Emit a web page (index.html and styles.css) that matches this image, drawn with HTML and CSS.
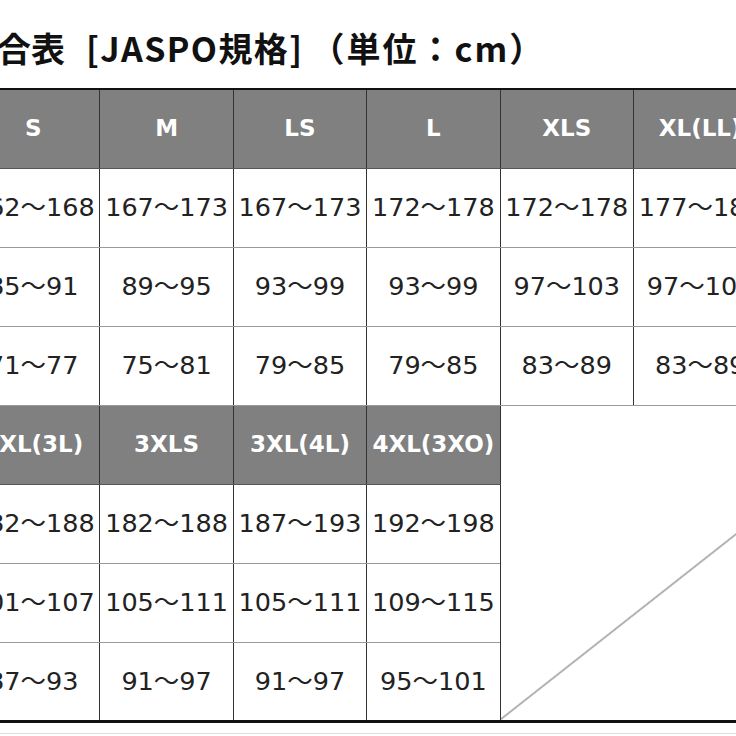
FILE: index.html
```html
<!DOCTYPE html>
<html lang="ja">
<head>
<meta charset="utf-8">
<title>サイズ適合表</title>
<link rel="stylesheet" href="styles.css">
</head>
<body>
<div class="page">
  <h1 class="title">合表<span class="std">[JASPO規格]</span><span class="unit">（単位：cm）</span></h1>
  <div class="table-wrap">
    <table class="size-table">
      <colgroup>
        <col class="c"><col class="c"><col class="c"><col class="c"><col class="c"><col class="c"><col class="c">
      </colgroup>
      <tr class="head">
        <th>S</th><th>M</th><th>LS</th><th>L</th><th>XLS</th><th>XL(LL)</th><th>2XLS</th>
      </tr>
      <tr>
        <td>162～168</td><td>167～173</td><td>167～173</td><td>172～178</td><td>172～178</td><td>177～183</td><td>177～183</td>
      </tr>
      <tr>
        <td>85～91</td><td>89～95</td><td>93～99</td><td>93～99</td><td>97～103</td><td>97～103</td><td>101～107</td>
      </tr>
      <tr>
        <td>71～77</td><td>75～81</td><td>79～85</td><td>79～85</td><td>83～89</td><td>83～89</td><td>87～93</td>
      </tr>
      <tr class="head">
        <th>2XL(3L)</th><th>3XLS</th><th>3XL(4L)</th><th>4XL(3XO)</th>
        <td class="blank" colspan="3" rowspan="4"></td>
      </tr>
      <tr>
        <td>182～188</td><td>182～188</td><td>187～193</td><td>192～198</td>
      </tr>
      <tr>
        <td>101～107</td><td>105～111</td><td>105～111</td><td>109～115</td>
      </tr>
      <tr>
        <td>87～93</td><td>91～97</td><td>91～97</td><td>95～101</td>
      </tr>
    </table>
  </div>
  <div class="footer-line"></div>
</div>
</body>
</html>
```
FILE: styles.css
```css
html, body {
  margin: 0;
  padding: 0;
  background: #ffffff;
  overflow: hidden;
}

.page {
  width: 736px;
  height: 736px;
  overflow: hidden;
}

.title {
  margin: 0 0 0 -3px;
  padding-top: 31px;
  height: 57px;
  line-height: 34px;
  font-family: "Noto Sans CJK JP", "Noto Sans", sans-serif;
  font-weight: 700;
  font-size: 34px;
  color: #111111;
  white-space: nowrap;
}

.title .std {
  margin-left: 21px;
  letter-spacing: 1.4px;
}

.title .unit {
  margin-left: 7px;
  letter-spacing: 2px;
}

.table-wrap {
  margin-left: -34px;
  width: 934px;
}

.size-table {
  border-collapse: collapse;
  table-layout: fixed;
  width: 934px;
  border-top: 2px solid #111111;
  border-bottom: 3px solid #111111;
}

.size-table .c {
  width: 133.4px;
}

.size-table tr {
  height: 79.1px;
}

.size-table th,
.size-table td {
  padding: 0;
  text-align: center;
  vertical-align: middle;
  border-left: 1px solid #333333;
  border-right: 1px solid #333333;
  border-top: 1px solid #9a9a9a;
  border-bottom: 1px solid #9a9a9a;
  white-space: nowrap;
  overflow: hidden;
}

.size-table td {
  font-family: "DejaVu Sans", "Noto Sans CJK JP", sans-serif;
  font-size: 25.5px;
  color: #222222;
  background: #ffffff;
  padding-bottom: 7px;
}

.size-table th {
  background: #808080;
  color: #ffffff;
  font-family: "DejaVu Sans", "Noto Sans", sans-serif;
  font-weight: 700;
  font-size: 23px;
  padding-bottom: 2px;
  border-bottom-color: #555555;
}

.size-table .blank {
  border-right: none;
  padding: 0;
  background: linear-gradient(to bottom right,
    transparent calc(50% - 1px),
    #8a8a8a calc(50% - 0.3px),
    #8a8a8a calc(50% + 0.3px),
    transparent calc(50% + 1px));
}

.footer-line {
  margin-top: 10px;
  border-top: 1px solid #dddddd;
}
```
